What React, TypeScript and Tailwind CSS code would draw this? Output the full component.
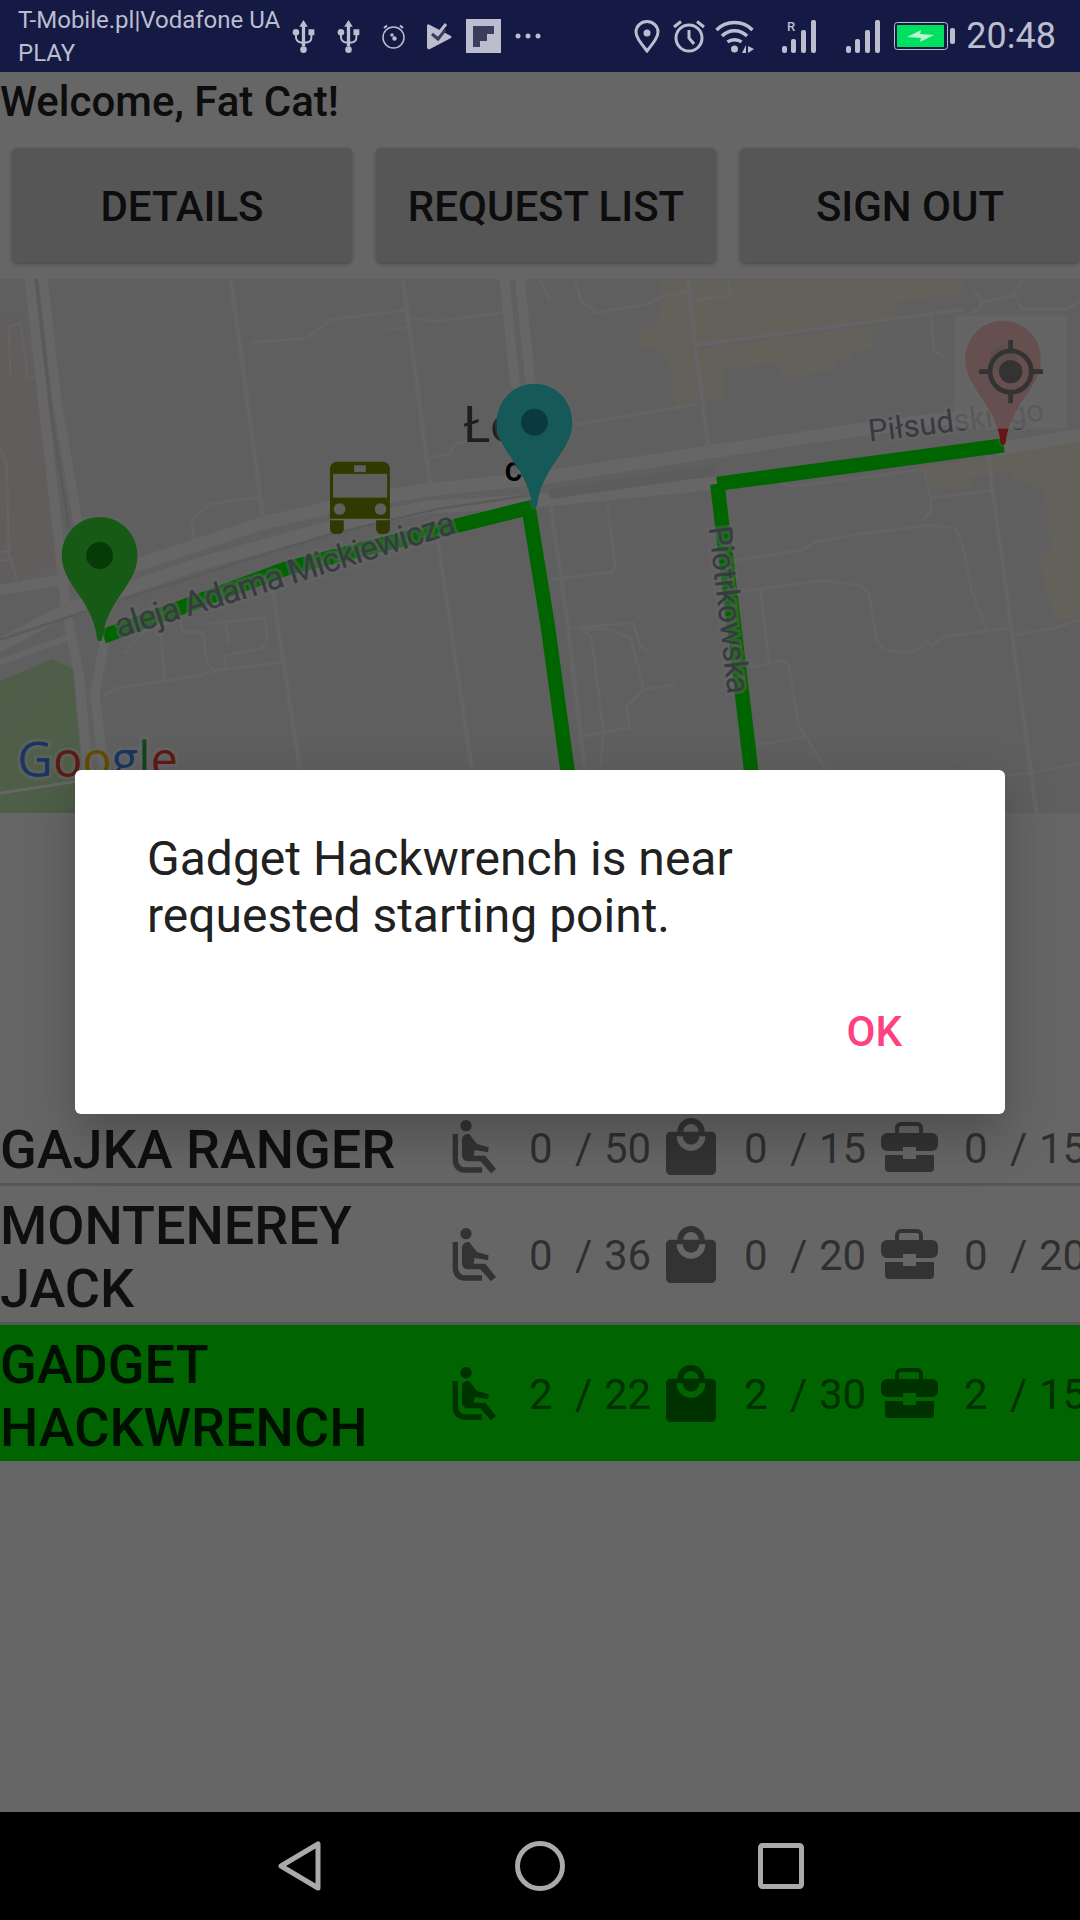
const streets: [string, number][] = [
  ["M670 0L700 220L765 700", 13],
  ["M1170 0L1250 600", 13],
  ["M1270 750L1370 1420", 12],
  ["M790 890L870 1420", 12],
  ["M730 180L890 170L960 115L1175 88", 7],
  ["M1112 145L1185 138", 6],
  ["M1190 110L1265 120L1460 95", 7],
  ["M1250 515L1305 505L1320 475L1400 460", 7],
  ["M760 630L610 650L555 695L565 755", 7],
  ["M300 1205L340 1185L570 1150L620 1135L820 1110", 8],
  ["M520 985L530 1020L590 1025L600 1110L620 1135", 7],
  ["M465 1010L478 1160", 7],
  ["M590 1000L770 980L775 1050L760 1070L655 1090L655 1135", 7],
  ["M655 1000L665 1060", 7],
  ["M360 1085L420 1020L520 985", 7],
  ["M0 490L20 540L25 800L50 870", 6],
  ["M0 790L35 785M0 815L40 812", 5],
  ["M30 285L25 135L60 125L80 285L105 285", 5],
  // right half of the map
  ["M1568 0L1598 60M1668 0L1688 60L1733 95L1878 70L1918 50L1993 35", 7],
  ["M1998 60L2123 45L2113 0", 7],
  ["M1998 0L2018 190L2058 490", 12],
  ["M2013 190L2798 85", 10],
  ["M1668 420L2028 360", 8],
  ["M2703 105L2713 205L2743 225", 7],
  ["M2868 500L2938 1020L3013 1568", 12],
  ["M2823 35L2848 50L2848 80L2818 95", 7],
  ["M2968 0L2943 40L2968 85L3098 85L3136 60", 7],
  ["M2848 65L2948 45", 7],
  ["M1763 650L1786 830L1778 848L1598 870", 7],
  ["M1598 650L1648 1000L1698 1422", 12],
  ["M2128 815L2328 785L2368 760L2483 740L2698 712L2773 720L2793 760L2823 905L2866 1020", 7],
  ["M2148 905L2388 873L2503 888L2523 910L2548 1050L2568 1075L2618 1082L2658 1078L2693 1045L2703 1065L2743 1035L2938 1010", 7],
  ["M2208 900L2233 1110", 7],
  ["M2178 1125L2273 1105L2290 1120L2318 1290L2398 1422", 7],
  ["M2198 1350L2338 1328", 7],
  ["M2268 590L2298 600L2683 550L2703 632L2878 612", 7],
  ["M2703 632L2703 675L2678 695", 7],
  ["M1648 1012L1838 995L1860 1065L1883 1078", 7],
  ["M1688 1012L1718 1040L1753 1320L1743 1422", 7],
  ["M1698 1012L1768 1015L1830 1040L1853 1120L1868 1190L1963 1175", 7],
  ["M1868 1190L1818 1240L1828 1300L1688 1325", 7],
  ["M1653 1130L1678 1130", 7],
  ["M2948 1030L3068 1010L3136 985", 7],
  ["M2918 1440L2998 1430L3136 1405", 7],
];

const pinPath =
  "M0 -112C62 -112 110 -62 110 0C110 50 80 85 50 130C25 170 10 210 8 240C7 252 -7 252 -8 240C-10 210 -25 170 -50 130C-80 85 -110 50 -110 0C-110 -62 -62 -112 0 -112Z";

function Pin({ x, y, color, dot }: { x: number; y: number; color: string; dot: string }) {
  return (
    <g transform={`translate(${x} ${y})`}>
      <path d={pinPath} fill={color} stroke="#fff" strokeOpacity={0.25} strokeWidth={12} paintOrder="stroke" />
      <circle r={39} fill={dot} />
    </g>
  );
}

function MapCanvas() {
  return (
    <svg viewBox="0 -3 3136 1551" className="block h-full w-full bg-[#eeeeee]">
      {/* land use */}
      <path d="M0 110L60 90L130 400L165 830L0 880Z" fill="#f5e8e8" />
      <path d="M0 1165L150 1100L210 1130L250 1551L0 1551Z" fill="#c4eab4" />
      <path d="M1913 0L2793 0L2793 40L2598 65L2598 105L2018 185L1993 45L2028 355L1958 365L1943 225L1918 220L1913 200L1858 195L1858 140L1908 135L1918 55Z" fill="#fbf3e0" />
      <path d="M2023 200L2593 125L2533 140L2533 200L2478 210L2478 230L2428 230L2428 260L2263 285L2263 240L2098 260L2108 345L2043 355Z" fill="#fbf3e0" />
      <path d="M2913 490L3136 465L3136 980L3063 985L3033 880L3018 800L3053 785L3033 610L2938 570L2933 555L2878 565L2818 570L2818 600L2708 605L2683 540L2908 515Z" fill="#fbf3e0" />

      {/* big roads and the tracks between them */}
      <g fill="none" stroke="#ffffff" strokeLinecap="round" strokeLinejoin="round">
        <path d="M85 0L130 400L175 800L190 950L230 1150L265 1551" strokeWidth={28} />
        <path d="M125 0L165 350L225 700" strokeWidth={26} />
        <path d="M305 1040L275 1200L300 1420" strokeWidth={28} />
        <path d="M1465 0L1495 300M1510 0L1540 300" strokeWidth={28} />
        <path d="M390 830L750 710L1000 650L1240 610L1568 575L2058 500L2528 430L2900 385M2900 490L3136 450" strokeWidth={38} />
        <path d="M0 1060L190 960L560 830L950 720L1240 660L1568 640L2078 590" strokeWidth={38} />
        <path d="M0 900L180 870" strokeWidth={30} />
        <path d="M0 1110L190 1040" strokeWidth={18} />
        <path d="M1608 620L2063 555" stroke="#e6e6e6" strokeWidth={30} />
        <path d="M0 1045L300 945L950 740L1270 665L1540 625" stroke="#e2e2e2" strokeWidth={7} />
        <path d="M105 0L150 400L200 720" stroke="#dedede" strokeWidth={8} />
        <path d="M0 1490L230 1455" strokeWidth={8} />
        <path d="M0 1290L160 1135" stroke="#dddddd" strokeWidth={6} />
      </g>
      <g fill="none" stroke="#fafafa" strokeLinejoin="round">
        {streets.map(([d, w]) => (
          <path key={d} d={d} strokeWidth={w} />
        ))}
      </g>

      {/* route */}
      <g fill="none" stroke="#00fa00" strokeWidth={42}>
        <path d="M300 1035L830 838L1340 710L1535 662L1590 1000L1650 1440" />
        <path d="M2915 480L2083 592" />
        <path d="M2083 592L2183 1440" />
      </g>

      {/* street names */}
      <g fontFamily="Roboto, sans-serif" fill="#8a92a0" stroke="#ffffff" strokeOpacity={0.45} strokeWidth={16} paintOrder="stroke">
        <text transform="translate(345 1040) rotate(-17.3)" fontSize={98} textLength={1030}>
          aleja Adama Mickiewicza
        </text>
        <text transform="translate(2525 470) rotate(-7)" fontSize={90}>
          Piłsudskiego
        </text>
        <text transform="translate(2058 718) rotate(83.5)" fontSize={94} textLength={490}>
          Piotrkowska
        </text>
      </g>
      <text x={1345} y={470} fontFamily="Roboto, sans-serif" fontSize={146} fill="#4d4d4d">
        Łó
      </text>
      <text x={1465} y={585} fontFamily="Roboto, sans-serif" fontSize={100} fontWeight={500} fill="#000000">
        c
      </text>

      {/* bus stop */}
      <g>
        <path d="M978 528H1112A20 20 0 0 1 1132 548V693H958V548A20 20 0 0 1 978 528Z" fill="#758f00" />
        <rect x={967} y={563} width={157} height={69} fill="#eeeeee" />
        <rect x={1028} y={538} width={34} height={20} fill="#eeeeee" />
        <circle cx={986} cy={665} r={17} fill="#eeeeee" />
        <circle cx={1105} cy={665} r={17} fill="#eeeeee" />
        <path d="M958 698H998V723A15 15 0 0 1 983 738H973A15 15 0 0 1 958 723Z" fill="#758f00" />
        <path d="M1092 698H1132V723A15 15 0 0 1 1117 738H1107A15 15 0 0 1 1092 723Z" fill="#758f00" />
      </g>

      <Pin x={289} y={800} color="#38e038" dot="#0f910f" />
      <Pin x={1552} y={413} color="#35dede" dot="#1a919e" />
      <Pin x={2913} y={230} color="#ff3535" dot="#b02020" />

      {/* google mark */}
      <text x={50} y={1442} fontFamily="'Open Sans', sans-serif" fontSize={142} fontWeight={500} stroke="#ffffff" strokeOpacity={0.5} strokeWidth={18} paintOrder="stroke">
        <tspan fill="#4285f4">G</tspan>
        <tspan fill="#ea4335">o</tspan>
        <tspan fill="#fbbc05">o</tspan>
        <tspan fill="#4285f4">g</tspan>
        <tspan fill="#34a853">l</tspan>
        <tspan fill="#ea4335">e</tspan>
      </text>

      {/* my location button */}
      <rect x={2771} y={102} width={329} height={330} rx={10} fill="#ffffff" fillOpacity={0.72} />
      <g fill="none" stroke="#808080" strokeWidth={14}>
        <circle cx={2935} cy={266} r={60} />
        <path d="M2935 174V206M2935 326V358M2843 266H2875M2995 266H3029" />
      </g>
      <circle cx={2935} cy={266} r={34} fill="#808080" />
    </svg>
  );
}

function SeatIcon() {
  return (
    <svg viewBox="20 15 135 165" className="ml-[7px] h-[55px] w-[45px]" fill="currentColor">
      <circle cx={62} cy={35} r={17} />
      <path d="M22 60H38V135C38 150 47 160 60 160H110V176H58C36 176 22 160 22 138Z" />
      <path d="M50 78C50 66 60 60 68 60C74 60 76 64 79 70L95 90L130 100L128 115L88 108L85 125H120L152 165L137 178L105 142H68C57 142 50 134 50 124Z" />
    </svg>
  );
}

function BagIcon() {
  return (
    <svg viewBox="18 27 150 171" className="ml-[6px] h-[57px] w-[50px]" fill="currentColor">
      <path d="M52 68A41 41 0 0 1 134 68H116A23 23 0 0 0 70 68Z" />
      <path
        fillRule="evenodd"
        d="M32 68H154A14 14 0 0 1 168 82V184A14 14 0 0 1 154 198H32A14 14 0 0 1 18 184V82A14 14 0 0 1 32 68ZM50 82A43 43 0 0 0 136 82H118A25 25 0 0 1 68 82Z"
      />
    </svg>
  );
}

function CaseIcon() {
  return (
    <svg viewBox="0 0 57 50" className="ml-[6px] h-[50px] w-[57px]" fill="currentColor">
      <path d="M16 11V6A4 4 0 0 1 20 2H36A4 4 0 0 1 40 6V11" fill="none" stroke="currentColor" strokeWidth={4} />
      <path d="M6 11H51A6 6 0 0 1 57 17V23A6 6 0 0 1 51 29H35V25H22V29H6A6 6 0 0 1 0 23V17A6 6 0 0 1 6 11Z" />
      <path d="M4 33H22V37H35V33H53V46A4 4 0 0 1 49 50H8A4 4 0 0 1 4 46Z" />
    </svg>
  );
}

function UsbIcon({ className }: { className?: string }) {
  return (
    <svg viewBox="35 30 70 100" className={className} fill="currentColor">
      <path d="M70 30L83 50H75V110H65V50H57Z" />
      <circle cx={70} cy={120} r={10} />
      <circle cx={47} cy={67} r={10} />
      <rect x={85} y={58} width={18} height={18} />
      <path d="M47 75V80Q47 96 62 98H67M94 75V82Q94 96 80 98H73" fill="none" stroke="currentColor" strokeWidth={6} />
    </svg>
  );
}

function Stat({ icon, width, used, total }: { icon: React.ReactNode; width: string; used: number; total: number }) {
  return (
    <div className="flex w-[215px] shrink-0 items-center text-[42px] leading-[50px] text-black/55">
      <div className={`flex shrink-0 items-center text-black/50 ${width}`}>{icon}</div>
      <span className="w-[46px] shrink-0 pt-[4px]">{used}</span>
      <span className="w-[29px] shrink-0 pt-[4px]">/</span>
      <span className="pt-[4px]">{total}</span>
    </div>
  );
}

const drivers = [
  { name: "GAJKA RANGER", stats: [[0, 50], [0, 15], [0, 15]], active: false },
  { name: "MONTENEREY JACK", stats: [[0, 36], [0, 20], [0, 20]], active: false },
  { name: "GADGET HACKWRENCH", stats: [[2, 22], [2, 30], [2, 15]], active: true },
];

function StatusBar() {
  return (
    <div className="flex h-[72px] shrink-0 items-center bg-[#141a44] text-[#bcbdcf]">
      <div className="ml-[18px] w-[274px] shrink-0 whitespace-nowrap pt-[2px] text-[24px] leading-[33px]">
        <div>T-Mobile.pl|Vodafone UA</div>
        <div>PLAY</div>
      </div>
      <UsbIcon className="h-[33px] w-[23px] shrink-0" />
      <UsbIcon className="ml-[22px] h-[33px] w-[23px] shrink-0" />
      <svg viewBox="0 0 25 25" className="ml-[21px] h-[25px] w-[25px] shrink-0" fill="none" stroke="currentColor" strokeWidth={1.5}>
        <circle cx={12.5} cy={13.5} r={10.5} />
        <path d="M3 4L6 1.5M22 4L19 1.5" strokeWidth={2} />
        <circle cx={11} cy={11} r={1} fill="currentColor" />
        <circle cx={13.5} cy={14.5} r={1.5} fill="currentColor" />
      </svg>
      <svg viewBox="0 0 26 27" className="ml-[20px] h-[27px] w-[26px] shrink-0">
        <path d="M1 3Q1 0 4 2L25 13Q26 14 25 15L4 26Q1 27 1 24Z" fill="currentColor" />
        <path d="M6 11L12 16L19 7" fill="none" stroke="#3a3d5c" strokeWidth={3} />
        <path d="M12 11L20 1" fill="none" stroke="currentColor" strokeWidth={3} />
      </svg>
      <svg viewBox="0 0 35 34" className="ml-[14px] h-[34px] w-[35px] shrink-0">
        <rect width={35} height={34} fill="currentColor" />
        <path d="M7 7H28V15H21V22H14V28H7Z" fill="#3a3d5c" />
      </svg>
      <svg viewBox="0 0 26 6" className="ml-[14px] h-[6px] w-[26px] shrink-0" fill="currentColor">
        <circle cx={3} cy={3} r={2.5} />
        <circle cx={13} cy={3} r={2.5} />
        <circle cx={23} cy={3} r={2.5} />
      </svg>
      <div className="flex-1" />
      <svg viewBox="0 0 26 33" className="h-[33px] w-[26px] shrink-0" fill="none" stroke="currentColor" strokeWidth={3}>
        <path d="M13 31C6 22 2 17 2 12A11 10.500 0 0 1 24 12C24 17 20 22 13 31Z" />
        <circle cx={13} cy={13} r={3.500} fill="currentColor" stroke="none" />
      </svg>
      <svg viewBox="0 0 32 33" className="ml-[13px] h-[33px] w-[32px] shrink-0" fill="none" stroke="currentColor" strokeWidth={3}>
        <circle cx={16} cy={18} r={13} />
        <path d="M1 7L8 1.500M31 7L24 1.500M16 10V18L21 24" />
      </svg>
      <svg viewBox="0 0 39 33" className="ml-[10px] h-[33px] w-[39px] shrink-0" fill="none" stroke="currentColor" strokeWidth={3.500}>
        <path d="M1.500 10C11 0 28 0 37.500 10" />
        <path d="M7 16C14 9 25 9 32 16" />
        <path d="M12.500 22C16 19 23 19 26.500 22" />
        <circle cx={19.500} cy={29} r={3.500} fill="currentColor" stroke="none" />
        <path d="M27 33L31 25V33ZM33 26L39 29L33 33Z" fill="currentColor" stroke="none" />
      </svg>
      <svg viewBox="0 0 34 33" className="ml-[28px] h-[33px] w-[34px] shrink-0" fill="currentColor">
        <rect x={0} y={26} width={5} height={7} rx={2} />
        <rect x={9} y={19} width={5} height={14} rx={2} />
        <rect x={19} y={10} width={5} height={23} rx={2} />
        <rect x={29} y={0} width={5} height={33} rx={2} />
        <text x={5} y={11} fontFamily="Roboto, sans-serif" fontSize={13} fontWeight={500}>
          R
        </text>
      </svg>
      <svg viewBox="0 0 34 33" className="ml-[30px] h-[33px] w-[34px] shrink-0" fill="currentColor">
        <rect x={0} y={26} width={5} height={7} rx={2} />
        <rect x={9} y={19} width={5} height={14} rx={2} />
        <rect x={19} y={10} width={5} height={23} rx={2} />
        <rect x={29} y={0} width={5} height={33} rx={2} />
      </svg>
      <svg viewBox="0 0 61 28" className="ml-[14px] h-[28px] w-[61px] shrink-0">
        <rect x={0.5} y={0.5} width={53} height={27} rx={3} fill="none" stroke="currentColor" />
        <rect x={3} y={3} width={47} height={22} fill="#00e060" />
        <rect x={56} y={6} width={5} height={16} rx={2} fill="currentColor" />
        <path d="M13 15L27 8L26 12L40 13L26 20L27 16Z" fill="#b5f5cf" />
      </svg>
      <span className="ml-[11px] mr-[24px] text-[36px] leading-none">20:48</span>
    </div>
  );
}

export default function App() {
  return (
    <div className="flex h-[1920px] w-[1080px] flex-col overflow-hidden bg-white font-[Roboto,sans-serif]">
      <StatusBar />

      <div className="relative min-h-0 flex-1">
        <div className="flex h-full flex-col">
          <div className="h-[76px] shrink-0 pt-[5px] text-[42px] leading-[50px] font-medium text-[#212121]">
            Welcome, Fat Cat!
          </div>
          <div className="flex h-[114px] shrink-0 gap-[24px] pl-[12px]">
            {["DETAILS", "REQUEST LIST", "SIGN OUT"].map((label) => (
              <div
                key={label}
                className="flex w-[340px] shrink-0 items-center justify-center rounded-[5px] bg-[#d6d7d7] pt-[2px] text-[42px] font-medium text-[#212121] shadow-[0_2px_4px_rgba(0,0,0,0.3)]"
              >
                {label}
              </div>
            ))}
          </div>
          <div className="mt-[17px] h-[534px] shrink-0">
            <MapCanvas />
          </div>
          <div className="mt-[297px] flex flex-col">
            {drivers.map((d) => (
              <div
                key={d.name}
                className={`flex items-center overflow-hidden py-[5px] ${d.active ? "bg-[#00fa00]" : "border-b-[3px] border-[#d8d8d8]"}`}
              >
                <div className="-mb-[3px] w-[445px] shrink-0 pt-[3px] pr-[40px] text-[54px] leading-[63px] font-medium text-black/85">
                  {d.name}
                </div>
                <Stat icon={<SeatIcon />} width="w-[84px]" used={d.stats[0][0]} total={d.stats[0][1]} />
                <Stat icon={<BagIcon />} width="w-[84px]" used={d.stats[1][0]} total={d.stats[1][1]} />
                <Stat icon={<CaseIcon />} width="w-[89px]" used={d.stats[2][0]} total={d.stats[2][1]} />
              </div>
            ))}
          </div>
        </div>

        {/* dialog scrim */}
        <div className="absolute inset-0 flex items-center justify-center bg-black/60">
          <div className="flex h-[344px] w-[930px] flex-col rounded-[6px] bg-white pt-[60px] shadow-[0_20px_50px_rgba(0,0,0,0.25)]">
            <p className="pr-[73px] pl-[72px] text-[48px] leading-[57px] text-[#212121]">
              Gadget Hackwrench is near requested starting point.
            </p>
            <div className="mt-[63px] flex justify-end pr-[103px] text-[42px] leading-[50px] font-medium text-[#ff4081]">
              OK
            </div>
          </div>
        </div>
      </div>

      <div className="flex h-[108px] shrink-0 items-center bg-black pl-[278px] text-[#aaaaaa]">
        <svg viewBox="0 0 43 50" className="h-[50px] w-[43px]" fill="none" stroke="currentColor" strokeWidth={5} strokeLinejoin="round">
          <path d="M3 25L40 3V47Z" />
        </svg>
        <svg viewBox="0 0 50 50" className="ml-[194px] h-[50px] w-[50px]" fill="none" stroke="currentColor" strokeWidth={5}>
          <circle cx={25} cy={25} r={22.5} />
        </svg>
        <svg viewBox="0 0 46 46" className="ml-[193px] h-[46px] w-[46px]" fill="none" stroke="currentColor" strokeWidth={5} strokeLinejoin="round">
          <rect x={2.5} y={2.5} width={41} height={41} rx={2} />
        </svg>
      </div>
    </div>
  );
}
